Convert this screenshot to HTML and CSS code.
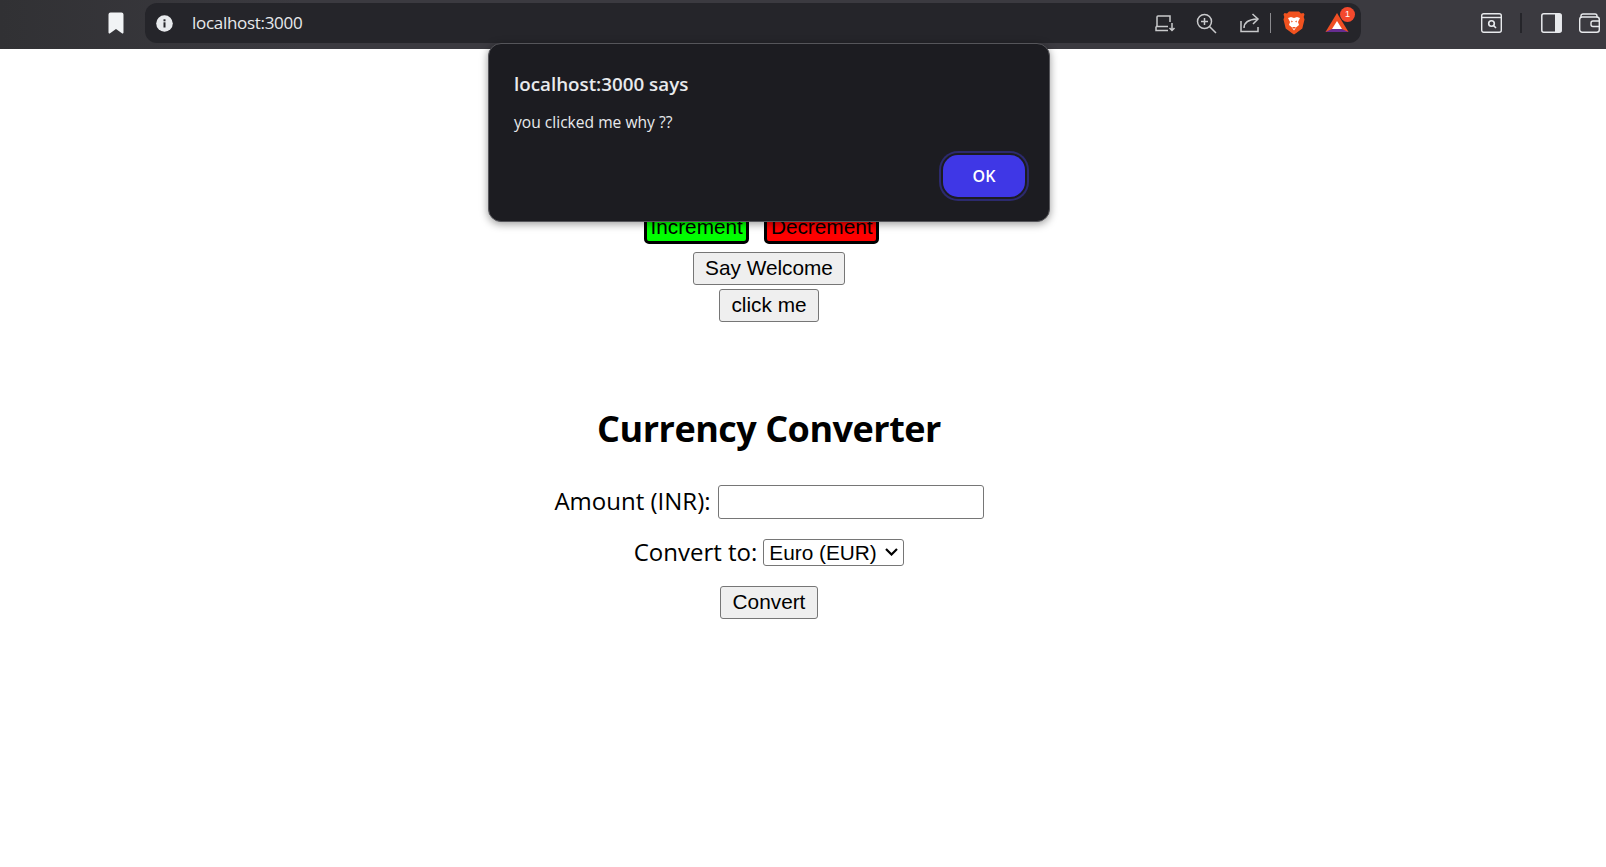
FILE: index.html
```html
<!DOCTYPE html>
<html lang="en">
<head>
  <meta charset="UTF-8">
  <meta name="viewport" content="width=device-width, initial-scale=1">
  <title>localhost:3000</title>
  <link rel="stylesheet" href="styles.css">
</head>
<body>
  <header class="toolbar">
    <svg class="bookmark" width="16" height="22" viewBox="0 0 16 22"><path d="M2.5 0.5h11a2 2 0 0 1 2 2v18a1 1 0 0 1-1.6 .8L8 17l-5.900 4.300a1 1 0 0 1-1.600-.8V2.500a2 2 0 0 1 2-2z" fill="#f1f3f5"/></svg>

    <div class="address">
      <svg class="info" width="17" height="17" viewBox="0 0 17 17"><circle cx="8.500" cy="8.500" r="8.300" fill="#e8eaed"/><rect x="7.500" y="7.300" width="2" height="5.200" fill="#25252a"/><rect x="7.500" y="4.300" width="2" height="2" fill="#25252a"/></svg>
      <span class="url">localhost:3000</span>

      <div class="address-icons">
        <svg class="icon-install" width="21" height="17" viewBox="0 0 21 17" fill="none" stroke="#c9cacc" stroke-width="1.500"><path d="M15 7V1H3a1 1 0 0 0-1 1v9"/><path d="M1 11.500h12M1 11.500v4h12"/><path d="M17 8v7.500M14.500 13 17 15.500l2.500-2.500"/></svg>
        <svg class="icon-zoom" width="21" height="21" viewBox="0 0 21 21" fill="none" stroke="#c9cacc" stroke-width="1.500"><circle cx="8.500" cy="8.500" r="7"/><path d="M13.500 13.500 20 20M8.500 5v7M5 8.500h7"/></svg>
        <svg class="icon-share" width="20" height="20" viewBox="0 0 20 20" fill="none" stroke="#c9cacc" stroke-width="1.500"><path d="M1 8v10.500h17V14"/><path d="M4 15c0-5 4-8.500 13-9"/><path d="M12.500 1 18 6l-5 5"/></svg>
        <span class="address-divider"></span>
        <svg class="icon-brave" width="22" height="24" viewBox="0 0 22 24"><path d="M6 0.500h10l2 2 2.500-.5 1 1.500-.8 2.500.8 2.500-2.200 9-6 4.500-2.300 1.500-2.300-1.500-6-4.500-2.200-9 .8-2.500L.500 3.500l1-1.500 2.500.5z" fill="#f1521f"/><path d="M5 7l3-1 3 1 3-1 3 1-2 4 1 3-3 2.500-2 3-2-3L6 14l1-3z" fill="#fff"/><path d="M8 9.500l2 1-1.500 1zM14 9.500l-2 1 1.500 1zM9 16h4l-2 2z" fill="#f1521f"/></svg>
        <div class="bat">
          <svg width="24" height="20" viewBox="0 0 24 20"><path d="M12 0 23.500 19H.500z" fill="#f04e23"/><path d="M12 8 17 16H7z" fill="#fff"/><path d="M.500 19 7 16h10l6.500 3z" fill="#662d91"/></svg>
          <span class="bat-badge">1</span>
        </div>
      </div>
    </div>

    <div class="browser-icons">
      <svg class="icon-tabsearch" width="21" height="20" viewBox="0 0 21 20" fill="none" stroke="#e8eaed" stroke-width="1.400"><rect x="0.700" y="0.700" width="19.600" height="18.600" rx="2"/><path d="M1 4.500h19"/><circle cx="10.500" cy="10.500" r="2.800" stroke-width="1.600"/><path d="M12.500 12.500 15 15" stroke-width="1.600"/></svg>
      <span class="browser-divider"></span>
      <svg class="icon-panel" width="21" height="20" viewBox="0 0 21 20"><rect x="0.800" y="0.800" width="19.400" height="18.400" rx="2" fill="none" stroke="#e8eaed" stroke-width="1.500"/><path d="M14 1h5a1.500 1.500 0 0 1 1.500 1.500v15A1.500 1.500 0 0 1 19 19h-5z" fill="#e8eaed"/></svg>
      <svg class="icon-wallet" width="21" height="20" viewBox="0 0 21 20" fill="none" stroke="#e8eaed" stroke-width="1.400"><path d="M2 4.500V3a2 2 0 0 1 2-2h12a2 2 0 0 1 2 2v1.500"/><rect x="0.700" y="4" width="19.600" height="15.300" rx="2.500"/><path d="M21 8h-7a2 2 0 0 0-2 2v1.500a2 2 0 0 0 2 2h7"/></svg>
    </div>
  </header>

  <main class="page">
    <div class="counter-row">
      <button class="counter counter-up">Increment</button>
      <button class="counter counter-down">Decrement</button>
    </div>
    <div class="plain-row"><button class="plain say">Say Welcome</button></div>
    <div class="plain-row"><button class="plain">click me</button></div>

    <section class="converter">
      <h1>Currency Converter</h1>
      <div class="field">
        <label for="amount">Amount (INR):</label>
        <input id="amount" type="text">
      </div>
      <div class="field field-select">
        <label for="target">Convert to:</label>
        <div class="select-wrap">
          <select id="target">
            <option>Euro (EUR)</option>
          </select>
          <svg class="select-arrow" width="13" height="8" viewBox="0 0 13 8" fill="none" stroke="#000" stroke-width="2.200"><path d="M1 1l5.500 5.500L12 1"/></svg>
        </div>
      </div>
      <button class="plain convert">Convert</button>
    </section>
  </main>

  <div class="alert">
    <div class="alert-title">localhost:3000 says</div>
    <div class="alert-message">you clicked me why ??</div>
    <div class="alert-actions">
      <button class="alert-ok">OK</button>
    </div>
  </div>
</body>
</html>
```

FILE: styles.css
```css
body {
  margin: 0;
  background: #fff;
  color: #000;
  font-family: "Liberation Sans", Arial, sans-serif;
  overflow: hidden;
}

/* browser chrome */
.toolbar {
  display: flex;
  align-items: center;
  height: 49px;
  box-sizing: border-box;
  padding: 0 6px 3px 108px;
  background: linear-gradient(90deg, #313134, #3b3a40 300px);
}

.bookmark {
  margin-right: 21px;
}

.address {
  display: flex;
  align-items: center;
  width: 1217px;
  height: 40px;
  box-sizing: border-box;
  padding-left: 11px;
  background: #25252a;
  border-radius: 12px;
}

.url {
  margin-left: 19px;
  margin-bottom: 2px;
  color: #e8eaed;
  font-family: "Open Sans", sans-serif;
  font-size: 17px;
  letter-spacing: -0.3px;
}

.address-icons {
  display: flex;
  align-items: center;
  margin-left: auto;
  margin-right: 12px;
}

.icon-zoom {
  margin-left: 20px;
}

.icon-share {
  margin-left: 23px;
}

.address-divider {
  width: 1px;
  height: 20px;
  margin: 0 12px 0 10px;
  background: #8a8a8e;
}

.bat {
  position: relative;
  display: flex;
  margin-left: 20px;
}

.bat-badge {
  position: absolute;
  top: -6px;
  right: -6px;
  width: 15px;
  height: 15px;
  border-radius: 50%;
  background: #f4492d;
  color: #fff;
  font-size: 9px;
  line-height: 15px;
  text-align: center;
}

.browser-icons {
  display: flex;
  align-items: center;
  margin-left: 120px;
}

.browser-divider {
  width: 2px;
  height: 20px;
  margin: 0 19px 0 18px;
  background: #25252a;
}

.icon-wallet {
  margin-left: 17px;
}

/* page under the dialog */
.page {
  width: 1538px;
  text-align: center;
}

.counter-row {
  display: flex;
  justify-content: center;
  gap: 15px;
  margin-top: 158px;
  padding-right: 15px;
}

.counter {
  height: 37px;
  padding: 3px 3.500px 0;
  border: 3px solid #000;
  border-top-width: 2px;
  border-radius: 5px;
  color: #000;
  font-family: inherit;
  font-size: 20.800px;
}

.counter-up {
  background: #00ff00;
}

.counter-down {
  background: #ff0000;
}

.plain-row {
  height: 37px;
}

.plain {
  height: 33px;
  padding: 0 11px 2px;
  background: #efefef;
  border: 1px solid #767676;
  border-radius: 3px;
  color: #000;
  font-family: inherit;
  font-size: 20.800px;
}

.say {
  padding-bottom: 1px;
}

.counter-row + .plain-row {
  margin-top: 8px;
}

.converter {
  padding-top: 78px;
}

h1 {
  margin: 0 0 31px;
  font-family: "Open Sans", sans-serif;
  font-size: 36px;
  line-height: 50px;
  letter-spacing: -0.5px;
}

.field {
  display: flex;
  justify-content: center;
  align-items: center;
  gap: 7px;
  margin-bottom: 20px;
  font-family: "Open Sans", sans-serif;
  font-size: 24px;
}

.field label {
  margin-bottom: 3px;
  line-height: 24px;
}

.field input {
  width: 266px;
  height: 34px;
  box-sizing: border-box;
  border: 1px solid #767676;
  border-radius: 3px;
}

.select-wrap {
  position: relative;
  display: flex;
}

.select-wrap select {
  appearance: none;
  width: 141px;
  height: 27px;
  box-sizing: border-box;
  padding: 0 0 0 5px;
  background: #fff;
  border: 1px solid #767676;
  border-radius: 3px;
  color: #000;
  font-family: "Liberation Sans", Arial, sans-serif;
  font-size: 20.800px;
}

.select-arrow {
  position: absolute;
  top: 9px;
  right: 6px;
}

.field-select {
  gap: 6px;
  margin-bottom: 20px;
}

.field-select label {
  margin-bottom: 1px;
}

.convert {
  padding: 0 12px 2px;
}

/* alert dialog */
.alert {
  position: absolute;
  top: 43px;
  left: 488px;
  width: 562px;
  height: 179px;
  box-sizing: border-box;
  padding: 28px 25px 0;
  background: #1c1c21;
  border: 1px solid #55555a;
  border-radius: 13px;
  box-shadow: 0 2px 8px rgba(0, 0, 0, 0.4);
  color: #e8eaed;
  font-family: "Open Sans", sans-serif;
}

.alert-title {
  font-size: 18.800px;
  font-weight: 600;
  line-height: 24px;
}

.alert-message {
  margin-top: 16px;
  font-size: 15.600px;
  line-height: 21px;
}

.alert-actions {
  display: flex;
  justify-content: flex-end;
  margin-top: 22px;
}

.alert-ok {
  width: 82px;
  height: 42px;
  margin-right: -1px;
  padding: 0;
  background: #3f37e6;
  border: none;
  border-radius: 15px;
  box-shadow: 0 0 0 2px #1c1c21, 0 0 0 4px #2c2a6e;
  color: #fff;
  font-family: "Open Sans", sans-serif;
  font-size: 16px;
  font-weight: 600;
}
```
